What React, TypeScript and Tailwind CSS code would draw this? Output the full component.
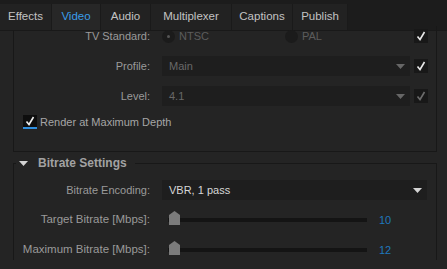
import React from "react";

const tabs = [
  { name: "Effects", w: "w-[52px]" },
  { name: "Video", w: "w-[49px]", active: true },
  { name: "Audio", w: "w-[50px]" },
  { name: "Multiplexer", w: "w-[81px]" },
  { name: "Captions", w: "w-[61px]" },
  { name: "Publish", w: "w-[55px]" },
];

function Check({ dim }: { dim?: boolean }) {
  return (
    <div className="w-[14px] h-[14px] bg-[#181818] flex items-center justify-center shrink-0">
      <svg width="10" height="10" viewBox="0 0 10 10">
        <path d="M1.5 5.5 L4 8.5 L8.5 1" fill="none" stroke={dim ? "#6c6c6c" : "#e8e8e8"} strokeWidth="1.6" />
      </svg>
    </div>
  );
}

function Arrow({ light }: { light?: boolean }) {
  return (
    <svg width="9" height="5" viewBox="0 0 9 5">
      <path d="M0 0 H9 L4.5 5 Z" fill={light ? "#d4d4d4" : "#666"} />
    </svg>
  );
}

function Select({ value, enabled }: { value: string; enabled?: boolean }) {
  return (
    <div className="flex-1 h-5 bg-[#1e1e1e] flex items-center justify-between pl-[7px] pr-[5px]">
      <span className={enabled ? "text-[#d6d6d6]" : "text-[#686868]"}>{value}</span>
      <Arrow light={enabled} />
    </div>
  );
}

function Label({ children }: { children: React.ReactNode }) {
  return <div className="w-[137px] shrink-0 text-right text-[#9a9a9a] pr-px whitespace-nowrap">{children}</div>;
}

function Radio({ label, on, w }: { label: string; on?: boolean; w: string }) {
  return (
    <div className={`flex items-center gap-[4px] ${w}`}>
      <div className="w-[13px] h-[13px] rounded-full bg-[#1b1b1b] flex items-center justify-center">
        {on && <div className="w-[3px] h-[3px] rounded-full bg-[#555]" />}
      </div>
      <span className="text-[#5c5c5c]">{label}</span>
    </div>
  );
}

function Slider({ value }: { value: string }) {
  return (
    <div className="flex items-center">
      <div className="relative ml-[6px] w-[199px] h-[4px] bg-[#141414]">
        <svg className="absolute left-px top-[-7px]" width="11" height="14" viewBox="0 0 11 14">
          <path d="M0 4 L5.5 0 L11 4 V14 H0 Z" fill="#7b7b7b" />
        </svg>
      </div>
      <span className="ml-[12px] text-[#1f78bd]">{value}</span>
    </div>
  );
}

export default function App() {
  return (
    <div
      className="w-[447px] h-[269px] overflow-hidden bg-[#242424] text-[11px] leading-none"
      style={{ fontFamily: '"Liberation Sans", Arial, sans-serif' }}
    >
      <div className="h-[31px] bg-[#1c1c1c] border-b border-[#191919] flex items-end">
        {tabs.map((t) => (
          <div
            key={t.name}
            className={`${t.w} h-[26px] flex items-center justify-center border-r border-[#1a1a1a] text-[11.5px] ${
              t.active ? "bg-[#272727] text-[#3a9ce8]" : "bg-[#222222] text-[#c2c2c2]"
            }`}
          >
            {t.name}
          </div>
        ))}
      </div>

      <div className="pl-[13px]">
        <div className="w-[424px] border-l border-r border-b border-[#181818] pb-[22px]">
          <div className="-mt-[5px] flex flex-col">
            <div className="h-5 flex items-center">
              <Label>TV Standard:</Label>
              <div className="ml-[11px] flex-1 flex items-center pr-[8px]">
                <Radio label="NTSC" on w="w-[123px]" />
                <Radio label="PAL" w="flex-1" />
                <Check />
              </div>
            </div>
            <div className="h-5 mt-[10px] flex items-center">
              <Label>Profile:</Label>
              <div className="ml-[11px] flex-1 flex items-center gap-[4px] pr-[8px]">
                <Select value="Main" />
                <Check />
              </div>
            </div>
            <div className="h-5 mt-[10px] flex items-center">
              <Label>Level:</Label>
              <div className="ml-[11px] flex-1 flex items-center gap-[4px] pr-[8px]">
                <Select value="4.1" />
                <Check dim />
              </div>
            </div>
            <div className="h-[14px] mt-[9px] flex items-center pl-[9px] gap-[3px]">
              <div className="w-[14px] h-[14px] bg-[#0e0e0e] border-b-2 border-[#2f8fe0] flex items-center justify-center">
                <svg width="10" height="10" viewBox="0 0 10 10">
                  <path d="M1.5 5.5 L4 8.5 L8.5 1" fill="none" stroke="#ececec" strokeWidth="1.6" />
                </svg>
              </div>
              <span className="text-[#a6a6a6]">Render at Maximum Depth</span>
            </div>
          </div>
        </div>

        <div className="w-[424px] mt-[1px]">
          <div className="h-5 flex items-center">
            <div className="w-[3px] h-[10px] self-end border-l border-t border-[#181818]" />
            <div className="ml-[3px] flex items-center">
              <Arrow light />
              <span className="ml-[10px] text-[12px] font-bold text-[#a2a2a2]">Bitrate Settings</span>
            </div>
            <div className="ml-[8px] flex-1 h-[10px] self-end border-t border-r border-[#181818]" />
          </div>
          <div className="border-l border-r border-[#181818] pt-[7px] pr-[9px] flex flex-col">
            <div className="h-5 flex items-center">
              <Label>Bitrate Encoding:</Label>
              <div className="ml-[11px] flex-1 flex">
                <Select value="VBR, 1 pass" enabled />
              </div>
            </div>
            <div className="h-5 mt-[10px] flex items-center">
              <Label>
                <span className="text-[11.5px]">Target Bitrate [Mbps]:</span>
              </Label>
              <div className="ml-[11px] flex-1">
                <Slider value="10" />
              </div>
            </div>
            <div className="h-5 mt-[10px] flex items-center">
              <Label>
                <span className="text-[11.5px]">Maximum Bitrate [Mbps]:</span>
              </Label>
              <div className="ml-[11px] flex-1">
                <Slider value="12" />
              </div>
            </div>
          </div>
        </div>
      </div>
    </div>
  );
}
